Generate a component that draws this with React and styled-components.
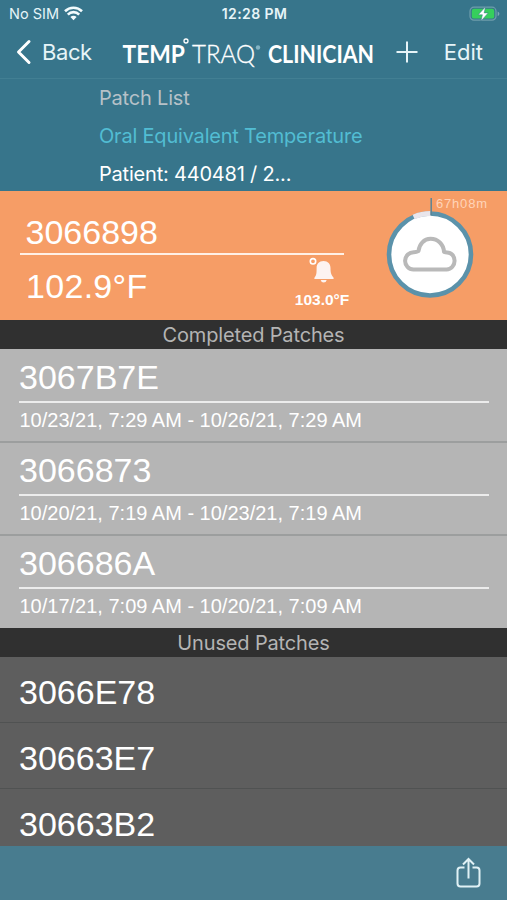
import styled, { createGlobalStyle } from "styled-components";

const GlobalStyle = createGlobalStyle`
  * {
    box-sizing: border-box;
  }

  body {
    margin: 0;
    background-color: #37758b;
  }
`;

const Screen = styled.div`
  display: flex;
  flex-direction: column;
  width: 507px;
  height: 900px;
  overflow: hidden;
  background-color: #37758b;
  color: white;
  font-family: "Liberation Sans", Arial, sans-serif;
  white-space: nowrap;
`;

const StatusBar = styled.div`
  display: grid;
  grid-template-columns: 1fr auto 1fr;
  align-items: center;
  height: 27px;
  padding: 0 7px 0 9px;
  font-family: Inter, sans-serif;
  font-size: 14.5px;
  color: #e6f4f8;
`;

const Carrier = styled.div`
  display: flex;
  align-items: center;
  gap: 5px;
`;

const Clock = styled.div`
  font-size: 14px;
  font-weight: 600;
  letter-spacing: 0.4px;
`;

const Battery = styled.svg`
  justify-self: end;
`;

const NavBar = styled.div`
  display: flex;
  align-items: center;
  height: 52px;
  padding: 0 24px 2px 16px;
  border-bottom: 1px solid #427f93;
  font-family: Inter, sans-serif;
  color: #e6f4f8;
`;

const BackButton = styled.div`
  display: flex;
  align-items: center;
  gap: 10px;
  width: 104px;
  font-size: 22px;
  letter-spacing: -0.4px;
`;

const LogoMark = styled.svg`
  flex-shrink: 0;
  overflow: visible;
`;

const Actions = styled.div`
  display: flex;
  flex: 1;
  align-items: center;
  justify-content: space-between;
  padding-left: 19px;
  font-size: 22px;
`;

const Heading = styled.div`
  height: 112px;
  padding-left: 99px;
  font-family: Inter, sans-serif;
  font-size: 20px;
  line-height: 38px;
`;

const HeadingLine = styled.div`
  color: ${(props) => props.$color};
  letter-spacing: -0.2px;
`;

const ActivePatch = styled.div`
  display: flex;
  height: 129px;
  padding-left: 20px;
  background-color: #f69d66;
`;

const Readings = styled.div`
  width: 324px;
  padding-top: 21px;
`;

const ActiveName = styled.div`
  height: 43px;
  padding-left: 5.5px;
  border-bottom: 2px solid #fff0e6;
  font-size: 34px;
  line-height: 41px;
`;

const ReadingRow = styled.div`
  display: flex;
  justify-content: space-between;
`;

const Temperature = styled.div`
  padding-left: 6px;
  font-size: 34px;
  line-height: 63px;
  letter-spacing: 0.3px;
`;

const Alarm = styled.div`
  display: flex;
  flex-direction: column;
  align-items: center;
  width: 56px;
  margin-right: -6px;
  font-size: 15.5px;
  font-weight: bold;
  line-height: 19px;
`;

const SectionTitle = styled.div`
  height: 29px;
  background-color: #303030;
  color: #b4b4b4;
  font-family: Inter, sans-serif;
  font-size: 20px;
  line-height: 30px;
  letter-spacing: -0.15px;
  text-align: center;
`;

const CompletedList = styled.div`
  height: 279px;
  background-color: #b5b5b5;
`;

const CompletedRow = styled.div`
  height: 93px;
  padding: 3px 18px 0 19px;

  &:first-child {
    height: 92px;
    padding-top: 4px;
  }

  & + & {
    border-top: 2px solid #9c9e9e;
  }
`;

const CompletedName = styled.div`
  height: 50px;
  border-bottom: 2px solid #ececec;
  font-size: 34px;
  line-height: 48px;
`;

const Period = styled.div`
  padding-left: 0.5px;
  font-size: 20px;
  line-height: 35px;
`;

const UnusedList = styled.div`
  height: 189px;
  overflow: hidden;
  background-color: #5e5e5e;
`;

const UnusedRow = styled.div`
  height: 66px;
  padding: 4px 19px 0;
  border-bottom: 1px solid #505252;
  font-size: 34px;
  line-height: 62px;
`;

const Toolbar = styled.div`
  display: flex;
  flex: 1;
  align-items: flex-start;
  justify-content: flex-end;
  padding: 10px 25px 0 0;
  background-color: #487c8f;
`;

const completed = [
  { id: "3067B7E", period: "10/23/21, 7:29 AM - 10/26/21, 7:29 AM" },
  { id: "3066873", period: "10/20/21, 7:19 AM - 10/23/21, 7:19 AM" },
  { id: "306686A", period: "10/17/21, 7:09 AM - 10/20/21, 7:09 AM" },
];

const unused = ["3066E78", "30663E7", "30663B2"];

function WifiIcon() {
  return (
    <svg width="19" height="15" viewBox="0 0 19 15" fill="none" stroke="#f2fbfd" strokeWidth="2.6">
      <path d="M1 5.2a12.2 12.2 0 0 1 17 0" />
      <path d="M3.8 8.6a7.9 7.9 0 0 1 11.4 0" />
      <path d="M6.4 11a4.2 4.2 0 0 1 6.2 0L9.5 14.3z" fill="#f2fbfd" stroke="none" />
    </svg>
  );
}

function BatteryIcon() {
  return (
    <Battery width="31" height="16" viewBox="0 0 31 16">
      <rect x="1" y="1.2" width="26" height="13" rx="4" fill="none" stroke="#6f9dac" strokeWidth="1.2" />
      <rect x="2.8" y="2.8" width="22.4" height="9.8" rx="2.2" fill="#36cf5c" />
      <path d="M28.7 5.5v4.6q1.7-.7 1.7-2.3t-1.7-2.3z" fill="#7fa9b6" />
      <path d="M16.5.8 9.2 8.8h4.2L12 15l7.2-8.1h-4.1z" fill="white" stroke="#37758b" strokeWidth="0.5" />
    </Battery>
  );
}

function Logo() {
  return (
    <LogoMark width="256" height="40" viewBox="0 0 256 40" fill="white" fontFamily="Lato, sans-serif" fontSize="24.5">
      <text x="2.5" y="30.5" fontWeight="bold" textLength="62.5" lengthAdjust="spacingAndGlyphs">
        TEMP
      </text>
      <circle cx="66" cy="9" r="2" fill="none" stroke="white" strokeWidth="1.3" />
      <text x="72" y="30.5" fontWeight="300" textLength="63" lengthAdjust="spacingAndGlyphs" stroke="white" strokeWidth="0.3">
        TRAQ
      </text>
      <circle cx="138" cy="15.5" r="2.2" fill="#82b3c4" />
      <text x="148" y="30.5" fontWeight="bold" textLength="106" lengthAdjust="spacingAndGlyphs">
        CLINICIAN
      </text>
    </LogoMark>
  );
}

function AlarmIcon() {
  return (
    <svg width="32" height="35" viewBox="0 0 32 35" fill="#fdf3f1">
      <circle cx="7" cy="6.3" r="2.7" fill="none" stroke="white" strokeWidth="1.6" />
      <path d="M17.5 6c4.5 0 7 3 7 7 0 5.2 1 7.3 2.9 9.4.6.8.3 1.6-.6 1.6H9.2c-.9 0-1.2-.8-.6-1.6 1.9-2.1 2-4.2 2-9.4 0-4 2.4-7 6.900-7z" />
      <path d="M14.700 25h6q-.6 2.500-3 2.500t-3-2.500z" />
    </svg>
  );
}

function PatchGauge() {
  return (
    <svg width="163" height="129" viewBox="344 191 163 129">
      <circle cx="430" cy="254.5" r="41" fill="white" stroke="#5b92aa" strokeWidth="4.6" />
      <path d="M413.6 217A41 41 0 0 1 430.5 213.5" fill="none" stroke="#e9e6ec" strokeWidth="4.8" />
      <path d="M431.2 198v17" stroke="#5b8495" strokeWidth="1.5" />
      <path
        d="M413.5 269.5a8.4 8.4 0 0 1 .5-17.3q2.5 0 4.500-1.200c.8-6.800 5.500-12.200 12-12.200 7.500 0 13 5.500 13.500 13q1.500.6 3 .6c4.500 0 7.600 4 7.600 8.300s-3.300 8.800-8 8.800z"
        fill="white"
        stroke="#b9b9b9"
        strokeWidth="4"
        strokeLinejoin="round"
      />
      <text x="436" y="208.2" fontSize="13" fill="#ffd4b9" textLength="51">
        67h08m
      </text>
    </svg>
  );
}

function App() {
  return (
    <Screen>
      <GlobalStyle />
      <StatusBar>
        <Carrier>
          No SIM
          <WifiIcon />
        </Carrier>
        <Clock>12:28 PM</Clock>
        <BatteryIcon />
      </StatusBar>
      <NavBar>
        <BackButton>
          <svg width="16" height="26" viewBox="0 0 16 26" fill="none" stroke="white" strokeWidth="3">
            <path d="M13 2.5 2.5 13 13 23.5" strokeLinecap="round" strokeLinejoin="round" />
          </svg>
          Back
        </BackButton>
        <Logo />
        <Actions>
          <svg width="24" height="24" viewBox="0 0 24 24" stroke="#e6f4f8" strokeWidth="2">
            <path d="M1.5 12h21M12 1.5v21" />
          </svg>
          Edit
        </Actions>
      </NavBar>
      <Heading>
        <HeadingLine $color="#b6c1c8">Patch List</HeadingLine>
        <HeadingLine $color="#52bdd3">Oral Equivalent Temperature</HeadingLine>
        <HeadingLine $color="#fff">Patient: 440481 / 2...</HeadingLine>
      </Heading>
      <ActivePatch>
        <Readings>
          <ActiveName>3066898</ActiveName>
          <ReadingRow>
            <Temperature>102.9°F</Temperature>
            <Alarm>
              <AlarmIcon />
              103.0°F
            </Alarm>
          </ReadingRow>
        </Readings>
        <PatchGauge />
      </ActivePatch>
      <SectionTitle>Completed Patches</SectionTitle>
      <CompletedList>
        {completed.map((patch) => (
          <CompletedRow key={patch.id}>
            <CompletedName>{patch.id}</CompletedName>
            <Period>{patch.period}</Period>
          </CompletedRow>
        ))}
      </CompletedList>
      <SectionTitle>Unused Patches</SectionTitle>
      <UnusedList>
        {unused.map((id) => (
          <UnusedRow key={id}>{id}</UnusedRow>
        ))}
      </UnusedList>
      <Toolbar>
        <svg width="28" height="34" viewBox="0 0 28 34" fill="none" stroke="#e0f1f5" strokeWidth="2">
          <path d="M10.5 11.5H6.5q-3 0-3 3v13q0 3 3 3h16q3 0 3-3v-13q0-3-3-3h-4" />
          <path d="M14.5 22.5V3M9 8.5 14.5 3 20 8.5" />
        </svg>
      </Toolbar>
    </Screen>
  );
}

export default App;
